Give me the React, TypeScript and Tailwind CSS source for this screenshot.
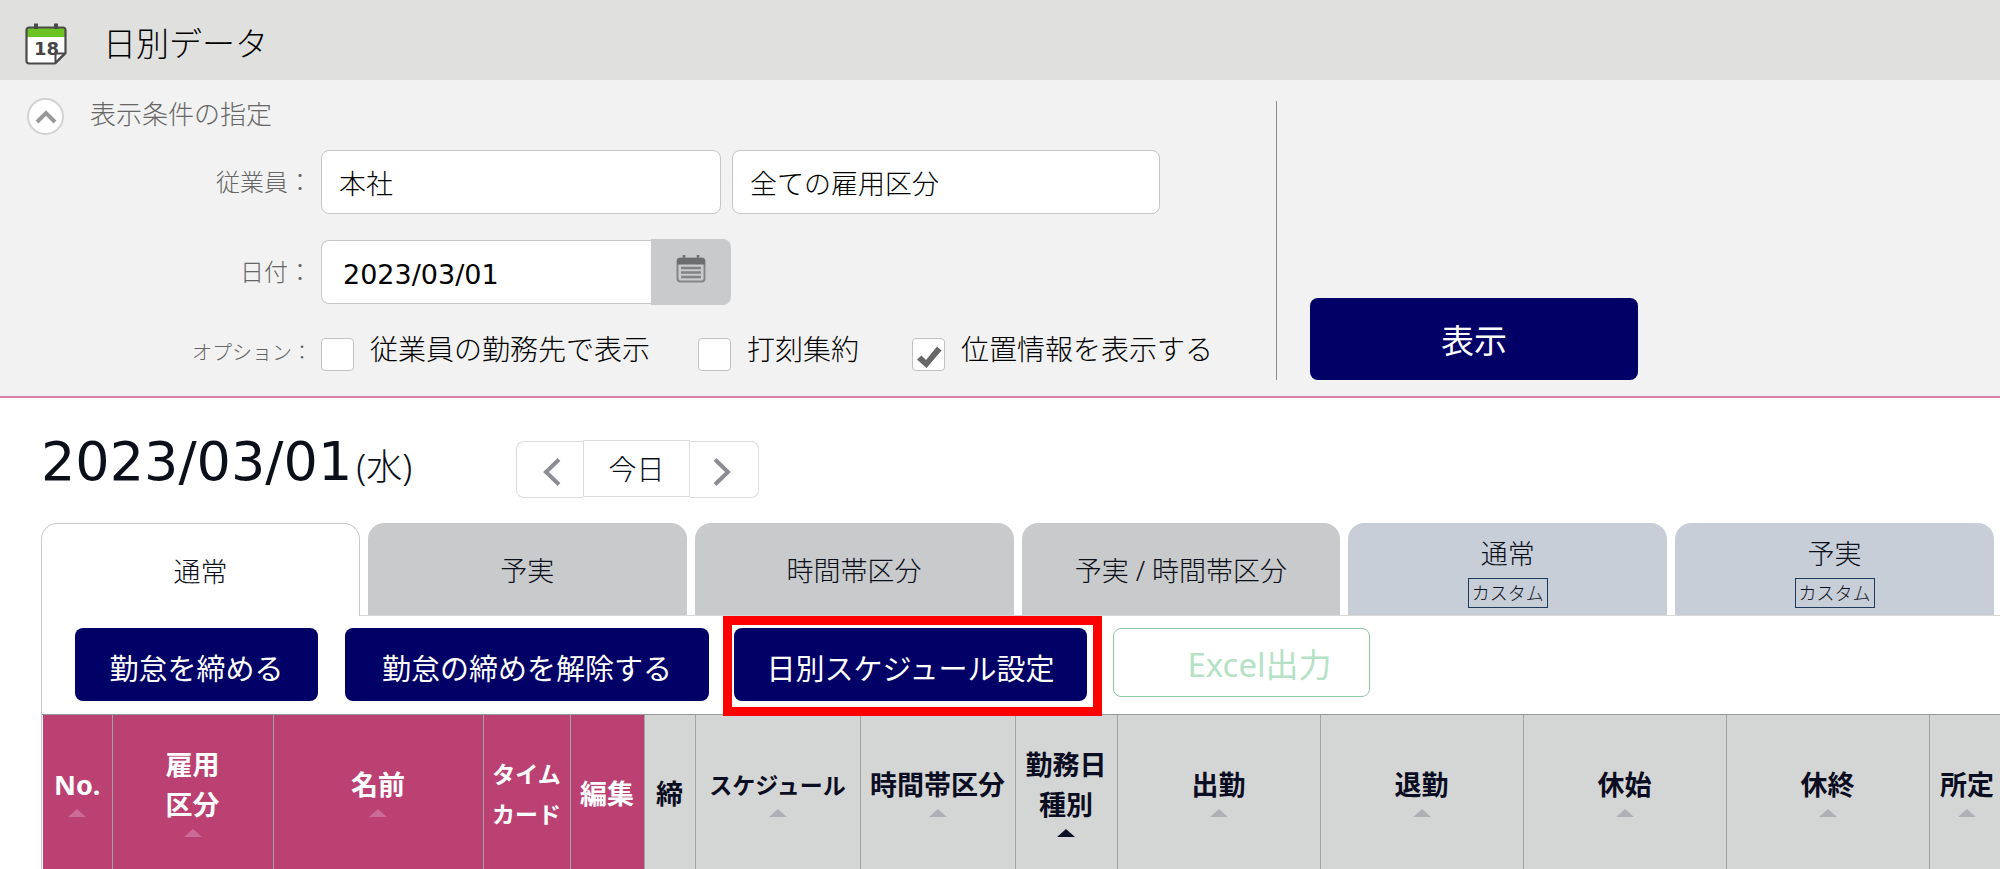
import type { ReactNode } from "react";

type Column = {
  lines: string[];
  width: string;
  tone: "pink" | "gray";
  sort?: "idle" | "active";
  small?: boolean;
};

const columns: Column[] = [
  { lines: ["No."], width: "w-[69px]", tone: "pink", sort: "idle" },
  { lines: ["雇用", "区分"], width: "w-[161px]", tone: "pink", sort: "idle" },
  { lines: ["名前"], width: "w-[210px]", tone: "pink", sort: "idle" },
  { lines: ["タイム", "カード"], width: "w-[87px]", tone: "pink", small: true },
  { lines: ["編集"], width: "w-[74px]", tone: "pink" },
  { lines: ["締"], width: "w-[51px]", tone: "gray" },
  { lines: ["スケジュール"], width: "w-[165px]", tone: "gray", sort: "idle", small: true },
  { lines: ["時間帯区分"], width: "w-[155px]", tone: "gray", sort: "idle" },
  { lines: ["勤務日", "種別"], width: "w-[102px]", tone: "gray", sort: "active" },
  { lines: ["出勤"], width: "w-[203px]", tone: "gray", sort: "idle" },
  { lines: ["退勤"], width: "w-[203px]", tone: "gray", sort: "idle" },
  { lines: ["休始"], width: "w-[203px]", tone: "gray", sort: "idle" },
  { lines: ["休終"], width: "w-[203px]", tone: "gray", sort: "idle" },
  { lines: ["所定"], width: "w-[76px]", tone: "gray", sort: "idle" },
];

const tabs = [
  { label: "通常", kind: "active" },
  { label: "予実", kind: "plain" },
  { label: "時間帯区分", kind: "plain" },
  { label: "予実 / 時間帯区分", kind: "plain" },
  { label: "通常", kind: "custom" },
  { label: "予実", kind: "custom" },
];

function PageIcon() {
  return (
    <svg width="42" height="42" viewBox="0 0 42 42" aria-hidden="true">
      <path d="M4 4.5h34a2.5 2.5 0 0 1 2.5 2.5v23L30 40.5H4A2.5 2.5 0 0 1 1.5 38V7A2.5 2.5 0 0 1 4 4.5z" fill="#fff" />
      <path d="M2 7a2 2 0 0 1 2-2h34a2 2 0 0 1 2 2v7H2z" fill="#6cc424" />
      <text x="21.5" y="32" textAnchor="middle" fontSize="18" fontWeight="700" fontFamily="DejaVu Sans, sans-serif" fill="#454545">18</text>
      <path d="M30.5 40V30.5H40z" fill="#fff" stroke="#4a4a4a" strokeWidth="2" strokeLinejoin="round" />
      <path d="M4 4.5h34a2.5 2.5 0 0 1 2.5 2.5v23L30 40.5H4A2.5 2.5 0 0 1 1.5 38V7A2.5 2.5 0 0 1 4 4.5z" fill="none" stroke="#4a4a4a" strokeWidth="2.2" />
      <path d="M11 0.5V6M31 0.5V6" stroke="#4a4a4a" strokeWidth="4" />
    </svg>
  );
}

function CalendarIcon() {
  return (
    <svg width="30" height="28" viewBox="0 0 30 28" aria-hidden="true">
      <path d="M8 0v5M22 0v5" stroke="#6c6d6f" strokeWidth="2.5" />
      <rect x="1.5" y="3.5" width="27" height="23" rx="3" fill="#c9cacb" stroke="#858688" strokeWidth="2" />
      <path d="M1 9.5V6a3 3 0 0 1 3-3h22a3 3 0 0 1 3 3v3.5z" fill="#6c6d6f" />
      <path d="M5 13h20M5 17.500h20M5 22h20" stroke="#828385" strokeWidth="2.4" />
    </svg>
  );
}

function FieldLabel({ htmlFor, children, small }: { htmlFor: string; children: ReactNode; small?: boolean }) {
  return (
    <label
      htmlFor={htmlFor}
      className={`w-[312px] shrink-0 text-right font-light leading-8 text-[#666] ${small ? "pb-1 text-[20px]" : "text-[24px]"}`}
    >
      {children}
    </label>
  );
}

function Option({ id, label, checked, width }: { id: string; label: string; checked?: boolean; width: string }) {
  return (
    <div className={`flex items-center ${width}`}>
      <span className="relative flex h-[33px] w-[33px] shrink-0">
        <input
          id={id}
          type="checkbox"
          defaultChecked={checked}
          className="peer h-full w-full appearance-none rounded-[4px] border border-[#c2c2c2] bg-white"
        />
        <svg viewBox="0 0 33 33" className="pointer-events-none absolute inset-0 hidden peer-checked:block" aria-hidden="true">
          <path d="M5 21.500L9.500 17.500L14 22L25 8.500L29.500 12.500L14.500 30z" fill="#666" />
        </svg>
      </span>
      <label htmlFor={id} className="pb-3 pl-4 text-[28px] font-light leading-8 whitespace-nowrap text-black">
        {label}
      </label>
    </div>
  );
}

function SortMark({ tone, sort }: { tone: Column["tone"]; sort: "idle" | "active" }) {
  const fill = sort === "active" ? "#0b1026" : tone === "pink" ? "#cb6b97" : "#adb0b4";
  return (
    <svg width="18" height="8" viewBox="0 0 18 8" className="mx-auto mt-1 mb-[5px]" aria-hidden="true">
      <path d="M9 0L18 8H0z" fill={fill} />
    </svg>
  );
}

function ActionButton({ children, width }: { children: ReactNode; width: string }) {
  return (
    <button
      type="button"
      className={`h-[73px] rounded-lg bg-[#000066] pt-2 text-[29px] leading-10 whitespace-nowrap text-white ${width}`}
    >
      {children}
    </button>
  );
}

export default function App() {
  return (
    <div className="min-h-screen overflow-hidden bg-white font-['Noto_Sans','Noto_Sans_CJK_JP',sans-serif] text-[#0b0f1a]">
      <header className="flex h-20 items-center bg-[#e0e0de] pl-[25px]">
        <div className="pt-2">
          <PageIcon />
        </div>
        <h1 className="pt-2 pl-9 text-[33px] leading-10 font-light text-black">日別データ</h1>
      </header>

      <section className="flex border-b-2 border-[#d684a6] bg-[#f2f2f2]">
        <form className="w-[1276px] shrink-0 pb-[25px]">
          <div className="flex h-[70px] items-start pt-[18px] pl-[27px]">
            <button
              type="button"
              aria-label="折りたたむ"
              className="flex h-[37px] w-[37px] items-center justify-center rounded-full border-2 border-[#d2d2d2] bg-white"
            >
              <svg width="22" height="14" viewBox="0 0 22 14" aria-hidden="true">
                <path d="M2 12L11 3L20 12" fill="none" stroke="#999" strokeWidth="4" />
              </svg>
            </button>
            <h2 className="pl-[26px] text-[26px] leading-8 font-light text-[#666]">表示条件の指定</h2>
          </div>
          <div className="flex h-16 items-center">
            <FieldLabel htmlFor="employee">従業員：</FieldLabel>
            <input
              id="employee"
              type="text"
              defaultValue="本社"
              className="ml-[9px] h-16 w-[400px] rounded-lg border border-[#c6c6c6] bg-white px-[17px] text-[27px] font-light text-black"
            />
            <input
              type="text"
              aria-label="雇用区分"
              defaultValue="全ての雇用区分"
              className="ml-[11px] h-16 w-[428px] rounded-lg border border-[#c6c6c6] bg-white px-[17px] text-[27px] font-light text-black"
            />
          </div>
          <div className="mt-[25px] flex h-[66px] items-center">
            <FieldLabel htmlFor="date">日付：</FieldLabel>
            <input
              id="date"
              type="text"
              defaultValue="2023/03/01"
              className="ml-[9px] h-16 w-[330px] rounded-l-lg border border-r-0 border-[#c9c9c9] bg-white pt-1 pl-[21px] font-['DejaVu_Sans',sans-serif] text-[27px] text-black"
            />
            <button
              type="button"
              aria-label="カレンダー"
              className="flex h-[66px] w-20 items-start justify-center rounded-r-lg bg-[#c9cacb] pt-4"
            >
              <CalendarIcon />
            </button>
          </div>
          <div className="mt-[33px] flex h-[33px] items-center">
            <FieldLabel htmlFor="opt-place" small>
              オプション：
            </FieldLabel>
            <div className="ml-[9px] flex">
              <Option id="opt-place" label="従業員の勤務先で表示" width="w-[377px]" />
              <Option id="opt-punch" label="打刻集約" width="w-[214px]" />
              <Option id="opt-location" label="位置情報を表示する" width="w-[320px]" checked />
            </div>
          </div>
        </form>
        <div className="mt-[21px] mb-4 flex flex-1 items-end border-l border-[#8e8e8e] pl-[33px]">
          <button type="button" className="h-[82px] w-[328px] rounded-lg bg-[#000066] pt-1 text-[33px] leading-10 text-white">
            表示
          </button>
        </div>
      </section>

      <main className="pl-[41px]">
        <div className="flex h-[125px] items-start">
          <h2 className="flex w-[475px] items-baseline pt-[34px] leading-[60px]">
            <span className="font-['DejaVu_Sans',sans-serif] text-[54px]">2023/03/01</span>
            <span className="pl-1 text-[36px] font-light">(水)</span>
          </h2>
          <div className="flex pt-[42px]">
            <button
              type="button"
              aria-label="前日"
              className="mt-px flex h-[57px] w-[67px] items-center justify-center rounded-l-lg border border-r-0 border-[#dcdcdc] bg-white"
            >
              <svg width="18" height="28" viewBox="0 0 18 28" className="mt-1 ml-1" aria-hidden="true">
                <path d="M16 1.5L3 14L16 26.5" fill="none" stroke="#8c8d92" strokeWidth="4" />
              </svg>
            </button>
            <button type="button" className="h-[57px] w-[107px] border border-[#dcdcdc] bg-white text-[28px] font-light">
              今日
            </button>
            <button
              type="button"
              aria-label="翌日"
              className="mt-px flex h-[57px] w-[69px] items-center justify-center rounded-r-lg border border-l-0 border-[#dcdcdc] bg-white"
            >
              <svg width="18" height="28" viewBox="0 0 18 28" className="mt-1 mr-1" aria-hidden="true">
                <path d="M2 1.5L15 14L2 26.5" fill="none" stroke="#8c8d92" strokeWidth="4" />
              </svg>
            </button>
          </div>
        </div>

        <nav className="flex">
          <div className="grid flex-1 grid-cols-6 gap-2" role="tablist">
            {tabs.map((tab, i) => {
              if (tab.kind === "active") {
                return (
                  <button
                    key={i}
                    type="button"
                    role="tab"
                    aria-selected="true"
                    className="h-[93px] rounded-t-2xl border border-b-0 border-[#cacaca] bg-white pt-1 text-[27px] font-light"
                  >
                    {tab.label}
                  </button>
                );
              }
              return (
                <div key={i} className="-ml-2 border-b border-[#d8d8d8] pl-2">
                  <button
                    type="button"
                    role="tab"
                    aria-selected="false"
                    className={`flex h-[92px] w-full flex-col items-center justify-center rounded-t-2xl pt-1 text-[27px] font-light ${
                      tab.kind === "custom" ? "bg-[#c7ced8]" : "bg-[#c9cacb]"
                    }`}
                  >
                    <span className="leading-10">{tab.label}</span>
                    {tab.kind === "custom" && (
                      <span className="mt-1 border border-[#1d3b5e] px-[3px] text-[18px] leading-7">カスタム</span>
                    )}
                  </button>
                </div>
              );
            })}
          </div>
          <div className="w-[6px] border-b border-[#d8d8d8]" />
        </nav>

        <div className="border-l border-[#cacaca]">
          <div className="flex items-start pt-3 pb-[13px] pl-[33px]">
            <ActionButton width="w-[243px]">勤怠を締める</ActionButton>
            <div className="ml-[27px] flex">
              <ActionButton width="w-[364px]">勤怠の締めを解除する</ActionButton>
            </div>
            <div className="relative ml-[25px] flex">
              <ActionButton width="w-[353px]">日別スケジュール設定</ActionButton>
              <div className="pointer-events-none absolute -top-3 -right-[15px] -bottom-[15px] -left-[11px] border-9 border-[#ff0000]" />
            </div>
            <button
              type="button"
              disabled
              className="ml-[26px] h-[69px] w-[257px] rounded-lg border border-[#8fc7a5] bg-white pt-1 pl-9 text-[33px] leading-10 text-[#b5e2c5]"
            >
              Excel出力
            </button>
          </div>

          <div className="overflow-hidden border-t border-[#979a98] pl-px">
            <table className="w-[1962px] table-fixed border-collapse">
              <thead>
                <tr className="h-[154px]">
                  {columns.map((col) => (
                    <th
                      key={col.lines.join("")}
                      scope="col"
                      className={`border-r border-[#a3a3a3] px-0 pt-[3px] align-middle leading-10 font-bold whitespace-nowrap ${col.width} ${
                        col.small ? "text-[23px]" : "text-[27px]"
                      } ${col.tone === "pink" ? "bg-[#bb4173] text-white" : "bg-[#d4d6d5] text-[#0b0d22]"}`}
                    >
                      {col.lines.map((line) => (
                        <div key={line}>{line}</div>
                      ))}
                      {col.sort && <SortMark tone={col.tone} sort={col.sort} />}
                    </th>
                  ))}
                </tr>
              </thead>
            </table>
          </div>
        </div>
      </main>
    </div>
  );
}
